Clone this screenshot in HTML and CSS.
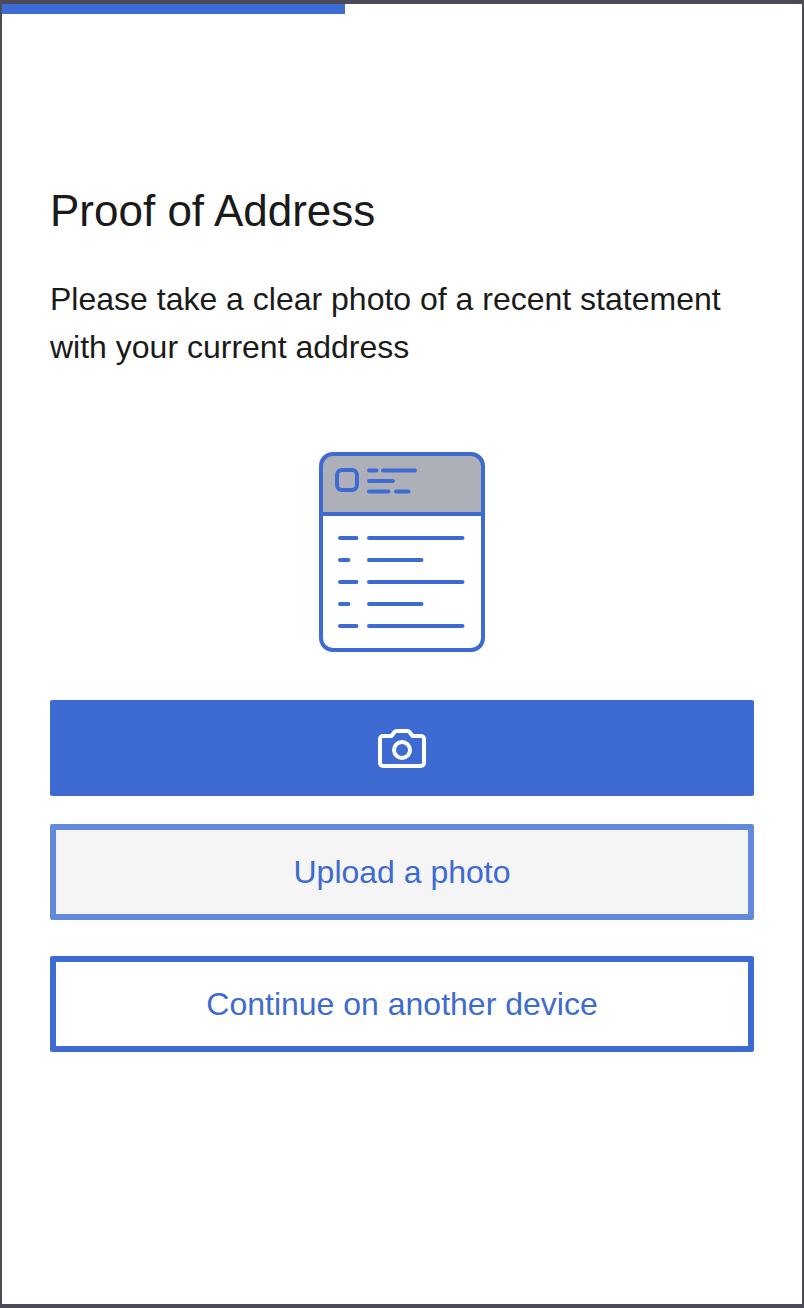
FILE: index.html
```html
<!DOCTYPE html>
<html lang="en">
<head>
    <meta charset="UTF-8">
    <meta name="viewport" content="width=device-width, initial-scale=1.0">
    <title>Proof of Address</title>
    <link rel="stylesheet" href="styles.css">
</head>
<body>
    <div class="frame">
        <div class="progress"></div>
        <div class="content">
            <h1 class="title">Proof of Address</h1>
            <p class="text">Please take a clear photo of a recent statement with your current address</p>
            <div class="illustration">
                <svg width="166" height="200" viewBox="0 0 166 200" fill="none" stroke="#3d6bd1" stroke-width="4" stroke-linecap="round">
                    <path d="M2 62V14A12 12 0 0 1 14 2H152A12 12 0 0 1 164 14V62Z" fill="#adb0b8" stroke="none"/>
                    <rect x="2" y="2" width="162" height="196" rx="12"/>
                    <path d="M2 62H164" stroke-linecap="butt"/>
                    <rect x="18" y="18" width="20" height="20" rx="5"/>
                    <path d="M50 18.500H57.500M64 18.500H96M50 29H74M50 39.500H69.500M77 39.500H89.500"/>
                    <path d="M21 86H37.500M50 86H143.500M21 108H29.500M50 108H102.500M21 130H37.500M50 130H143.500M21 152H29.500M50 152H102.500M21 174H37.500M50 174H143.500"/>
                </svg>
            </div>
            <button class="btn btn-primary" title="Take a photo">
                <svg width="48" height="40" viewBox="0 0 48 40" fill="none" stroke="#fff" stroke-width="4" stroke-linejoin="round">
                    <path d="M5 8H13.500L16.500 4Q17.300 3 18.500 3H29.500Q30.700 3 31.500 4L34.500 8H43A3 3 0 0 1 46 11V35A3 3 0 0 1 43 38H5A3 3 0 0 1 2 35V11A3 3 0 0 1 5 8Z"/>
                    <circle cx="24" cy="22" r="8"/>
                </svg>
            </button>
            <button class="btn btn-upload">Upload a photo</button>
            <button class="btn btn-outline">Continue on another device</button>
        </div>
    </div>
</body>
</html>
```
FILE: styles.css
```css
* {
    box-sizing: border-box;
}

body {
    margin: 0;
    font-family: "Liberation Sans", Arial, sans-serif;
    background-color: #ffffff;
}

.frame {
    height: 1308px;
    border: solid #4a4a58;
    border-width: 4px 2px;
    background-color: #ffffff;
}

.progress {
    width: 343px;
    height: 10px;
    background-color: #3d6bd1;
}

.content {
    padding: 0 48px;
}

.title {
    margin: 170px 0 0;
    font-size: 44px;
    line-height: 54px;
    font-weight: 400;
    color: #1a1a1a;
}

.text {
    margin: 37px 0 0;
    font-size: 32px;
    line-height: 48px;
    color: #1a1a1a;
}

.illustration {
    display: flex;
    justify-content: center;
    margin-top: 81px;
    height: 200px;
}

.btn {
    display: flex;
    align-items: center;
    justify-content: center;
    width: 100%;
    height: 96px;
    padding: 0;
    font-family: inherit;
    font-size: 32px;
    color: #3d6bd1;
    background-color: #ffffff;
    border: 6px solid #3d6bd1;
    border-radius: 2px;
}

.btn-primary {
    margin-top: 48px;
    background-color: #3d6bd1;
}

.btn-upload {
    margin-top: 28px;
    background-color: #f5f5f5;
    border-color: #6389db;
}

.btn-outline {
    margin-top: 36px;
}
```
